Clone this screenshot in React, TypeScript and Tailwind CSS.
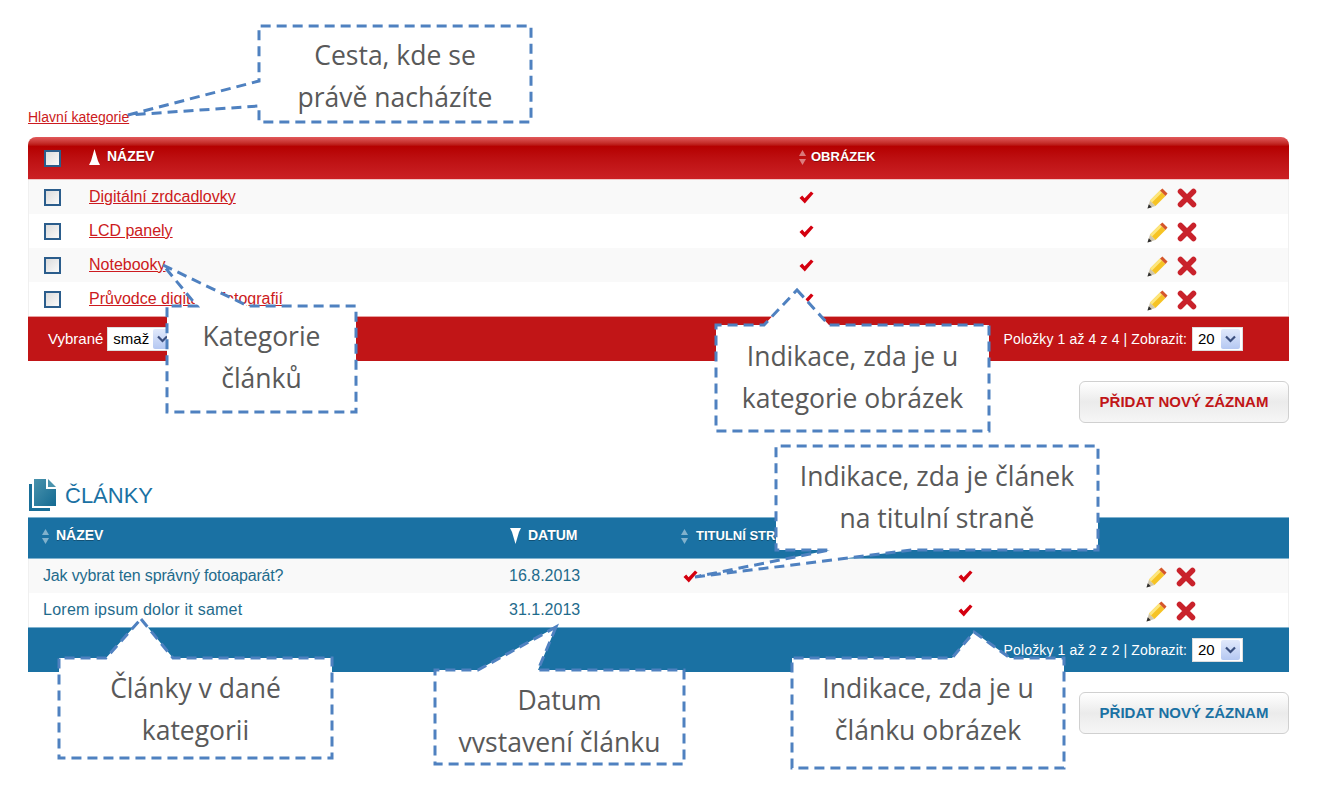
import React from 'react';

const SortBoth = () => (
  <svg width="7" height="15" viewBox="0 0 7 15" className="shrink-0">
    <path d="M3.5 0 L7 6 L0 6 Z" fill="#ffffff" fillOpacity="0.45" />
    <path d="M3.5 15 L7 9 L0 9 Z" fill="#ffffff" fillOpacity="0.45" />
  </svg>
);

const SortUp = () => (
  <svg width="11" height="16" viewBox="0 0 11 16" className="shrink-0">
    <path d="M5.5 0 L9 12 L11 16 L0 16 L2 12 Z" fill="#ffffff" />
  </svg>
);

const SortDown = () => (
  <svg width="11" height="16" viewBox="0 0 11 16" className="shrink-0">
    <path d="M5.5 16 L9 4 L11 0 L0 0 L2 4 Z" fill="#ffffff" />
  </svg>
);

const Check = () => (
  <svg width="15" height="13" viewBox="0 0 15 13" className="shrink-0">
    <path d="M0.5 7 L3.2 4.6 L5.6 7.2 L12 0.6 L14.5 2.6 L5.8 12.4 Z" fill="#d4000f" />
  </svg>
);

const Pencil = () => (
  <svg width="21" height="21" viewBox="0 0 21 21" className="shrink-0">
    <path d="M0.5 20.5 L3 12.5 L8.5 18 Z" fill="#cfc6ae" />
    <path d="M0.5 20.5 L1.8 16.2 L4.8 19.2 Z" fill="#2e2e2e" />
    <path d="M3 12.5 L13 2.5 L18.5 8 L8.5 18 Z" fill="#f6c324" />
    <path d="M3 12.5 L13 2.5 L15 4.5 L5 14.5 Z" fill="#fde67e" />
    <path d="M13 2.5 L15.4 0.5 L20.5 5.6 L18.5 8 Z" fill="#d5562a" />
  </svg>
);

const Cross = () => (
  <svg width="20" height="20" viewBox="0 0 20 20" className="shrink-0">
    <path d="M3.5 3.5 L16.5 16.5 M16.5 3.5 L3.5 16.5" stroke="#c9222b" strokeWidth="5.5" strokeLinecap="round" />
  </svg>
);

const Actions = () => (
  <div className="flex items-center gap-[9px] mt-[2px]">
    <Pencil />
    <Cross />
  </div>
);

const Checkbox = () => (
  <div className="w-[17px] h-[17px] border-2 border-[#2b5d8c] bg-gradient-to-br from-[#dcdcdc] to-[#fafafa]" />
);

const FakeSelect = ({ value, width }: { value: string; width: string }) => (
  <div className={`${width} h-[24px] bg-white border border-[#dddddd] flex items-center justify-between pl-[5px] pr-[2px] text-[15px] text-black`}>
    <span>{value}</span>
    <span className="w-[19px] h-[20px] rounded-[2px] bg-gradient-to-b from-[#e1e9fb] to-[#b5c8f2] flex items-center justify-center">
      <svg width="11" height="8" viewBox="0 0 11 8">
        <path d="M1 1.5 L5.5 6 L10 1.5" fill="none" stroke="#3b4f7e" strokeWidth="2.2" />
      </svg>
    </span>
  </div>
);

const AddButton = ({ color }: { color: string }) => (
  <div className="flex justify-end mt-[20px]">
    <button className={`w-[210px] h-[42px] rounded-[6px] border border-[#d0d0d0] bg-gradient-to-b from-[#ffffff] via-[#ebebeb] to-[#f6f6f6] font-bold text-[15px] ${color}`}>
      PŘIDAT NOVÝ ZÁZNAM
    </button>
  </div>
);

const categories = ['Digitální zrdcadlovky', 'LCD panely', 'Notebooky', 'Průvodce digitální fotografií'];

const CategoryTable = () => (
  <div>
    <div className="h-[43px] rounded-t-[8px] bg-gradient-to-b from-[#e2595b] via-[#b50000] via-[22%] to-[#cb2024] flex items-start pt-[11px] text-white text-[14px] leading-[17px] font-bold [text-shadow:0_1px_0_rgba(0,0,0,0.3)] border-b border-[#f0c8c8]">
      <div className="w-[61px] pl-[16px] pt-[2px]"><Checkbox /></div>
      <div className="w-[710px] flex items-start gap-[7px]">
        <span className="pt-[1px]"><SortUp /></span>
        <span>NÁZEV</span>
      </div>
      <div className="flex items-start gap-[5px] text-[13px]">
        <span className="pt-[2px]"><SortBoth /></span>
        <span>OBRÁZEK</span>
      </div>
    </div>
    {categories.map((name, i) => (
      <div key={name} className={`h-[34px] flex items-center border-x border-[#f0f0f0] ${i % 2 === 0 ? 'bg-[#f9f9f9]' : 'bg-white'}`}>
        <div className="w-[60px] pl-[15px]"><Checkbox /></div>
        <a className="w-[710px] text-[16px] text-[#cc1a20] underline">{name}</a>
        <div className="w-[348px]"><Check /></div>
        <Actions />
      </div>
    ))}
    <div className="h-[45px] bg-[#c11517] border-t border-[#e8a0a0] flex items-center justify-between text-white text-[14px] pl-[20px] pr-[46px]">
      <div className="flex items-center gap-[4px]">
        <span className="text-[15px]">Vybrané</span>
        <FakeSelect value="smaž" width="w-[68px]" />
      </div>
      <div className="flex items-center gap-[5px]">
        <span className="tracking-[0.13px]">Položky 1 až 4 z 4 | Zobrazit:</span>
        <FakeSelect value="20" width="w-[51px]" />
      </div>
    </div>
  </div>
);

const articles = [
  { title: 'Jak vybrat ten správný fotoaparát?', date: '16.8.2013', spacing: 'tracking-[-0.15px]' },
  { title: 'Lorem ipsum dolor it samet', date: '31.1.2013', spacing: 'tracking-[0.25px]' },
];

const ArticleTable = () => (
  <div>
    <div className="h-[42px] bg-[#1a71a3] border-y border-[#7fb2cf] flex items-start pt-[9px] pl-[14px] text-white text-[14px] leading-[17px] font-bold [text-shadow:0_1px_0_rgba(0,0,0,0.3)]">
      <div className="w-[468px] flex items-start gap-[7px]">
        <span className="pt-[2px]"><SortBoth /></span>
        <span>NÁZEV</span>
      </div>
      <div className="w-[171px] flex items-start gap-[7px]">
        <span className="pt-[1px]"><SortDown /></span>
        <span>DATUM</span>
      </div>
      <div className="flex items-start gap-[8px] text-[13px]">
        <span className="pt-[2px]"><SortBoth /></span>
        <span>TITULNÍ STRANA</span>
      </div>
    </div>
    {articles.map((a, i) => (
      <div key={a.title} className={`h-[34px] flex items-center pl-[14px] text-[16px] text-[#1f6b8c] border-x border-[#f0f0f0] ${i % 2 === 0 ? 'bg-[#f9f9f9]' : 'bg-white'}`}>
        <div className={`w-[466px] ${a.spacing}`}>{a.title}</div>
        <div className="w-[174px]">{a.date}</div>
        <div className="w-[275px]">{i === 0 && <Check />}</div>
        <div className="w-[188px]"><Check /></div>
        <Actions />
      </div>
    ))}
    <div className="h-[45px] bg-[#1a71a3] border-t border-[#7fb2cf] flex items-center justify-end text-white text-[14px] pr-[46px]">
      <div className="flex items-center gap-[5px]">
        <span className="tracking-[0.13px]">Položky 1 až 2 z 2 | Zobrazit:</span>
        <FakeSelect value="20" width="w-[51px]" />
      </div>
    </div>
  </div>
);

const DocIcon = () => (
  <svg width="28" height="32" viewBox="0 0 28 32" className="shrink-0">
    <defs>
      <linearGradient id="docFill" x1="0" y1="0" x2="1" y2="1">
        <stop offset="0" stopColor="#4a93ad" />
        <stop offset="1" stopColor="#146a92" />
      </linearGradient>
    </defs>
    <path d="M0 5 H3 V29 H21 V32 H0 Z" fill="#1a6f98" />
    <path d="M5 0 H17 V10 H27 V27 H5 Z" fill="url(#docFill)" />
    <path d="M19 0 L27 8 H19 Z" fill="#4a93ad" />
  </svg>
);

// outlines of the callouts, each box with its pointer
const calloutShapes = [
  '128,115 259,81 259,26 531,26 531,122 259,122 259,106',
  '163,265 248,306 356,306 356,412 167,412 167,306 197,306',
  '797,290 829,325 989,325 989,431 716,431 716,325 764,325',
  '695,577 912,550 1098,550 1098,446 776,446 776,550 830,550',
  '141,619 173,658 332,658 332,758 59,758 59,658 106,658',
  '556,627 538,670 684,670 684,764 435,764 435,670 478,670',
  '974,632 1010,658 1064,658 1064,768 792,768 792,658 952,658',
];

const calloutText = 'absolute text-center text-[26.5px] leading-[42px] text-[#595959] font-["Open_Sans",sans-serif]';

const Callouts = () => (
  <>
    <svg viewBox="0 0 1318 794" className="absolute inset-0 w-[1318px] h-[794px]">
      {calloutShapes.map(points => (
        <polygon key={points} points={points} fill="#ffffff" stroke="#4f81c0" strokeWidth="3" strokeDasharray="10 6" />
      ))}
    </svg>
    <div className={`${calloutText} left-[259px] top-[34px] w-[272px]`}>Cesta, kde se<br />právě nacházíte</div>
    <div className={`${calloutText} left-[167px] top-[315px] w-[189px]`}>Kategorie<br />článků</div>
    <div className={`${calloutText} left-[716px] top-[335px] w-[273px]`}>Indikace, zda je u<br />kategorie obrázek</div>
    <div className={`${calloutText} left-[776px] top-[455px] w-[322px]`}>Indikace, zda je článek<br />na titulní straně</div>
    <div className={`${calloutText} left-[59px] top-[667px] w-[273px]`}>Články v dané<br />kategorii</div>
    <div className={`${calloutText} left-[435px] top-[679px] w-[249px] h-[74px] overflow-hidden`}>Datum<br />vystavení článku</div>
    <div className={`${calloutText} left-[792px] top-[667px] w-[272px]`}>Indikace, zda je u<br />článku obrázek</div>
  </>
);

export default function App() {
  return (
    <div className="relative w-[1318px] h-[794px] overflow-hidden bg-white font-['Liberation_Sans',Arial,sans-serif]">
      <div className="w-[1261px] ml-[28px] pt-[109px]">
        <a className="block h-[28px] text-[14px] leading-[16px] text-[#cc1a20] underline">Hlavní kategorie</a>
        <CategoryTable />
        <AddButton color="text-[#c11517]" />
        <div className="h-[32px] mt-[55px] flex items-center gap-[8px] text-[22px] text-[#1a71a3]">
          <span className="ml-[1px] pt-[1px]"><DocIcon /></span>
          <span className="pt-[3px]">ČLÁNKY</span>
        </div>
        <div className="mt-[7px]"><ArticleTable /></div>
        <AddButton color="text-[#1a71a3]" />
      </div>
      <Callouts />
    </div>
  );
}
